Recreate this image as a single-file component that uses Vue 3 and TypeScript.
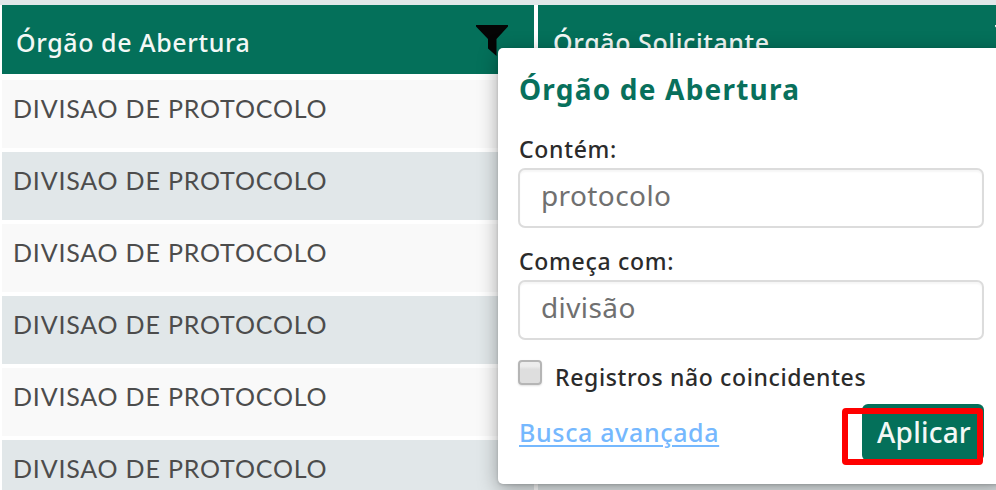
<script setup lang="ts">
import { ref } from 'vue'

const rows: string[] = Array.from({ length: 6 }, () => 'DIVISAO DE PROTOCOLO')
const contains = ref('protocolo')
const startsWith = ref('divisão')
const unmatched = ref(false)
</script>

<template>
  <main class="page">
    <div class="grid">
      <div class="row head">
        <div class="cell">
          <span class="head-label">Órgão de Abertura</span>
          <svg class="funnel" viewBox="0 0 32 31" width="32" height="31">
            <path d="M0 0H32V1.5L20.5 14V31L12 23.5V14L0 1.5Z" fill="#050505" />
          </svg>
        </div>
        <div class="cell">
          <span class="head-label">Órgão Solicitante</span>
          <svg class="funnel edge" viewBox="0 0 32 31" width="32" height="31">
            <path d="M0 0H32V1.5L20.5 14V31L12 23.5V14L0 1.5Z" fill="#e9f3f0" />
          </svg>
        </div>
      </div>
      <div v-for="(name, i) in rows" :key="i" class="row body">
        <div class="cell"><span class="value">{{ name }}</span></div>
        <div class="cell"></div>
      </div>
    </div>

    <form class="popup" @submit.prevent>
      <h2>Órgão de Abertura</h2>
      <label class="label" for="contains">Contém:</label>
      <input id="contains" v-model="contains" class="field" type="text" />
      <label class="label" for="starts">Começa com:</label>
      <input id="starts" v-model="startsWith" class="field" type="text" />
      <label class="check">
        <input v-model="unmatched" type="checkbox" />
        <span>Registros não coincidentes</span>
      </label>
      <div class="actions">
        <a href="#" class="advanced">Busca avançada</a>
        <div class="apply-wrap">
          <button type="submit" class="apply">Aplicar</button>
          <div class="highlight"></div>
        </div>
      </div>
    </form>
  </main>
</template>

<style>
body {
  margin: 0;
  overflow: hidden;
}
</style>

<style scoped>
.page {
  position: relative;
  box-sizing: border-box;
  width: 996px;
  height: 490px;
  overflow: hidden;
  padding-top: 5px;
  background: #e1e7e9;
  font-family: "Noto Sans", "Open Sans", sans-serif;
}
.grid {
  display: flex;
  flex-direction: column;
  gap: 4.2px;
  padding-left: 2px;
  background: #fff;
}
.row {
  display: grid;
  grid-template-columns: 532px 520px;
  gap: 4px;
  flex: none;
}
.cell {
  box-sizing: border-box;
  display: flex;
}
.head {
  height: 68.8px;
  margin-bottom: 1.8px;
}
.head .cell {
  justify-content: space-between;
  background: #04705a;
  padding: 20px 26px 0 14px;
  color: #f3f8f6;
}
.head .cell + .cell {
  padding-left: 15px;
}
.head-label {
  font-size: 25px;
  line-height: 34px;
  font-weight: 500;
  letter-spacing: 0.6px;
  white-space: nowrap;
}
.head .cell .edge {
  margin-right: 5px;
}
.body {
  height: 67.9px;
}
.body .cell {
  padding: 10px 11px 0;
  background: #f9f9f9;
}
.body:nth-child(odd) .cell {
  background: #e1e7e9;
}
.value {
  font-family: Lato, "Noto Sans", sans-serif;
  font-size: 25px;
  line-height: 36px;
  letter-spacing: 0.82px;
  color: #4c4c4c;
}
.popup {
  position: absolute;
  left: 498px;
  top: 48px;
  box-sizing: border-box;
  width: 508px;
  height: 436px;
  padding: 20px 22px 0 21px;
  border-radius: 5px;
  background: #fff;
  box-shadow: 0 5px 20px rgba(0, 0, 0, 0.35), 0 1px 3px rgba(0, 0, 0, 0.15);
  color: #2b2b2b;
}
h2 {
  margin: 0;
  font-size: 28px;
  line-height: 42px;
  font-weight: 700;
  letter-spacing: 1.2px;
  color: #08705c;
}
.label {
  display: block;
  height: 36px;
  margin-top: 16px;
  font-size: 23px;
  line-height: 34px;
  font-weight: 500;
  letter-spacing: 0.7px;
}
h2 + .label {
  margin-top: 22px;
}
.field {
  display: block;
  box-sizing: border-box;
  width: 466px;
  height: 60px;
  margin: 0 0 0 -1px;
  padding: 0 20px 6px 21px;
  border: 2px solid #dcdcdc;
  border-radius: 7px;
  background: #fff;
  box-shadow: inset 0 2px 2px rgba(0, 0, 0, 0.04);
  color: #707070;
  font-family: inherit;
  font-size: 28px;
  letter-spacing: 0.4px;
  outline: none;
}
.check {
  display: flex;
  align-items: flex-start;
  margin-top: 20px;
  height: 40px;
  font-size: 23px;
  line-height: 35px;
  font-weight: 500;
  letter-spacing: 0.63px;
  white-space: nowrap;
}
.check input {
  appearance: none;
  box-sizing: border-box;
  width: 24px;
  height: 25px;
  margin: 0 13px 0 -1px;
  border: 2px solid #b5b5b5;
  border-radius: 4px;
  background: linear-gradient(#ececec 0 20%, #dedede 35%);
  box-shadow: 0 1px 2px rgba(0, 0, 0, 0.12);
}
.actions {
  display: flex;
  justify-content: space-between;
}
.advanced {
  margin-top: 14px;
  color: #75b8fe;
  font-size: 25px;
  line-height: 36px;
  font-weight: 500;
  letter-spacing: 0.65px;
  text-decoration-thickness: 2px;
  text-underline-offset: 3px;
}
.apply-wrap {
  position: relative;
  padding-top: 4px;
}
.apply {
  display: block;
  width: 122px;
  height: 57px;
  padding: 0 0 2px 2px;
  border: 0;
  border-radius: 6px;
  background: #04705a;
  color: #f3f8f6;
  font-family: inherit;
  font-size: 28px;
  font-weight: 500;
  letter-spacing: 0.2px;
}
.highlight {
  position: absolute;
  left: -20px;
  top: 8px;
  box-sizing: border-box;
  width: 141px;
  height: 57px;
  border: 6px solid #fe0000;
  border-radius: 4px;
}
</style>
